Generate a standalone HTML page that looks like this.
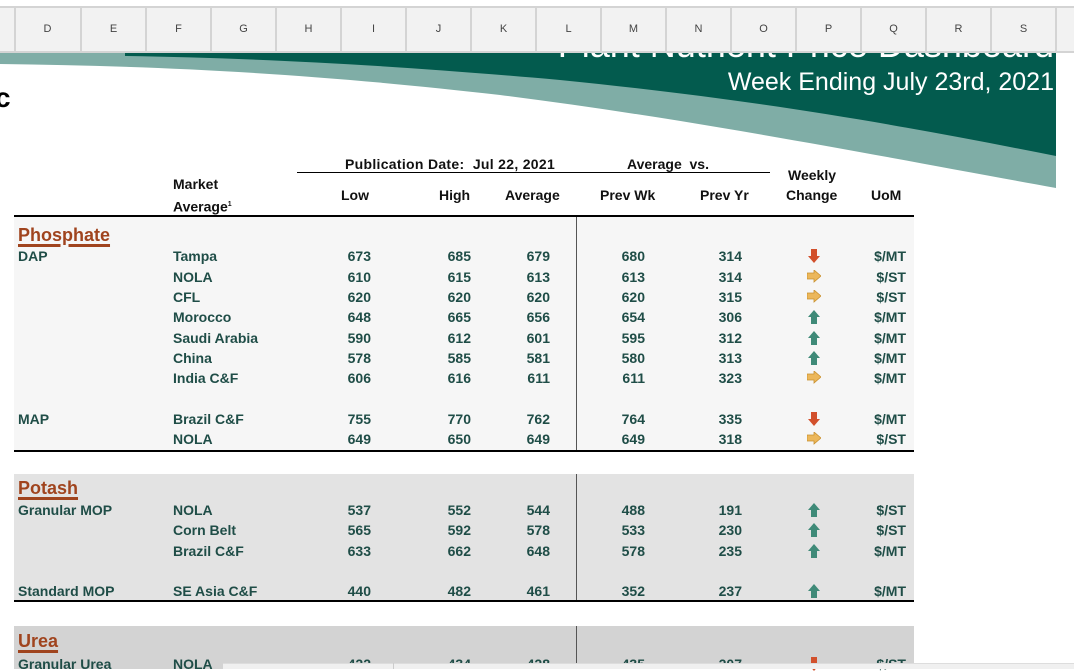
<!DOCTYPE html>
<html><head><meta charset="utf-8"><style>
*{margin:0;padding:0;box-sizing:border-box}
body{width:1074px;height:669px;overflow:hidden;background:#fff;position:relative;font-family:"Liberation Sans",Arial,sans-serif}
.hdr{position:absolute;left:0;top:6px;width:1074px;height:47px;background:#f2f2f2;border-top:2px solid #d4d4d4;border-bottom:2px solid #d4d4d4;z-index:5}
.hdr div{position:absolute;top:0;height:43px;line-height:43px;text-align:center;font-size:11px;color:#444;border-left:2px solid #d4d4d4;width:65px}
.t{position:absolute;font-size:14px;font-weight:bold;color:#1f4d47;white-space:nowrap;line-height:16px}
.r{text-align:right}
.h{color:#111;font-size:14px}
.sec{position:absolute;font-size:18px;font-weight:bold;color:#a0441e;text-decoration:underline;text-decoration-thickness:3px;text-underline-offset:3px;line-height:20px}
.bg{position:absolute;left:14px;width:900px}
.ln{position:absolute;background:#000}
</style></head><body>
<div class="hdr">
<div style="left:14px;">D</div><div style="left:80px">E</div><div style="left:145px">F</div><div style="left:210px">G</div><div style="left:275px">H</div><div style="left:340px">I</div><div style="left:405px">J</div><div style="left:470px">K</div><div style="left:535px">L</div><div style="left:600px">M</div><div style="left:665px">N</div><div style="left:730px">O</div><div style="left:795px">P</div><div style="left:860px">Q</div><div style="left:925px">R</div><div style="left:990px">S</div><div style="left:1055px;width:30px"></div>
</div>
<svg style="position:absolute;left:0;top:0" width="1074" height="669">
<path d="M0 53 L1056 53 L1056 188 C900 160 700 120 500 95 C300 72 150 66 0 64 Z" fill="#7fada6"/>
<path d="M125 53 L1056 53 L1056 156 C900 125 760 100 560 80 C380 64 250 58 125 56 Z" fill="#035b4e"/>
</svg>
<div style="position:absolute;right:20px;top:27px;font-size:36px;line-height:36px;color:#fff;white-space:nowrap;z-index:1">Plant Nutrient Price Dashboard</div>
<div style="position:absolute;right:20px;top:68px;font-size:25px;line-height:28px;color:#fff;white-space:nowrap">Week Ending July 23rd, 2021</div>
<div style="position:absolute;left:-5px;top:82px;font-size:28px;font-weight:bold;color:#000">c</div>

<div class="bg" style="top:217px;height:234px;background:#f6f6f6"></div>
<div class="bg" style="top:474px;height:127px;background:#e3e3e3"></div>
<div class="bg" style="top:626px;height:43px;background:#d3d3d3"></div>
<div class="ln" style="left:576px;top:217px;width:1px;height:234px;background:#555"></div>
<div class="ln" style="left:576px;top:474px;width:1px;height:127px;background:#555"></div>
<div class="ln" style="left:576px;top:626px;width:1px;height:43px;background:#555"></div>
<div class="ln" style="left:297px;top:172px;width:473px;height:1px"></div>
<div class="ln" style="left:14px;top:215px;width:900px;height:2px"></div>
<div class="ln" style="left:14px;top:450px;width:900px;height:2px"></div>
<div class="ln" style="left:14px;top:600px;width:900px;height:2px"></div>

<div class="t h" style="left:345px;top:156px;letter-spacing:0.3px">Publication Date:&nbsp; Jul 22, 2021</div>
<div class="t h" style="left:627px;top:156px">Average&nbsp; vs.</div>
<div class="t h" style="left:173px;top:176px">Market</div>
<div class="t h" style="left:173px;top:197px">Average<sup style="font-size:7px">1</sup></div>
<div class="t h" style="left:341px;top:187px">Low</div>
<div class="t h" style="left:439px;top:187px">High</div>
<div class="t h" style="left:505px;top:187px">Average</div>
<div class="t h" style="left:600px;top:187px">Prev Wk</div>
<div class="t h" style="left:700px;top:187px">Prev Yr</div>
<div class="t h" style="left:788px;top:167px">Weekly</div>
<div class="t h" style="left:786px;top:187px">Change</div>
<div class="t h" style="left:871px;top:187px">UoM</div>

<div class="sec" style="left:18px;top:225px">Phosphate</div>
<div class="sec" style="left:18px;top:478px">Potash</div>
<div class="sec" style="left:18px;top:631px">Urea</div>

<svg width="0" height="0" style="position:absolute"><defs>
<path id="dn" d="M3 0 H9 V7 H12 L6 14 L0 7 H3 Z" fill="#d2502c"/>
<path id="rt" d="M0 3 H7 V0 L14 6 L7 12 V9 H0 Z" fill="#ecb75a" stroke="#c8902f" stroke-width=".8"/>
<path id="up" d="M6 0 L12 7 H9 V14 H3 V7 H0 Z" fill="#3f8a78"/>
</defs></svg>

<div id="rows"></div>
<script>
var R=[
[256,'DAP','Tampa',673,685,679,680,314,'dn','$/MT'],
[277,'','NOLA',610,615,613,613,314,'rt','$/ST'],
[297,'','CFL',620,620,620,620,315,'rt','$/ST'],
[317,'','Morocco',648,665,656,654,306,'up','$/MT'],
[338,'','Saudi Arabia',590,612,601,595,312,'up','$/MT'],
[358,'','China',578,585,581,580,313,'up','$/MT'],
[378,'','India C&F',606,616,611,611,323,'rt','$/MT'],
[419,'MAP','Brazil C&F',755,770,762,764,335,'dn','$/MT'],
[439,'','NOLA',649,650,649,649,318,'rt','$/ST'],
[510,'Granular MOP','NOLA',537,552,544,488,191,'up','$/ST'],
[530,'','Corn Belt',565,592,578,533,230,'up','$/ST'],
[551,'','Brazil C&F',633,662,648,578,235,'up','$/MT'],
[591,'Standard MOP','SE Asia C&F',440,482,461,352,237,'up','$/MT'],
[664,'Granular Urea','NOLA',422,434,428,435,207,'dn','$/ST']];
var h='';var X=[371,471,550,645,742];
R.forEach(function(r){var t=r[0]-8;
h+='<div class="t" style="left:18px;top:'+t+'px">'+r[1]+'</div>';
h+='<div class="t" style="left:173px;top:'+t+'px">'+r[2].replace('&','&amp;')+'</div>';
for(var i=0;i<5;i++)h+='<div class="t r" style="left:'+(X[i]-60)+'px;width:60px;top:'+t+'px">'+r[3+i]+'</div>';
var w=r[8]=='rt'?14:12;
h+='<svg style="position:absolute;left:'+(814-w/2)+'px;top:'+(r[0]-7)+'px" width="'+w+'" height="14"><use href="#'+r[8]+'"/></svg>';
h+='<div class="t r" style="left:846px;width:60px;top:'+t+'px">'+r[9]+'</div>';});
document.getElementById('rows').innerHTML=h;
</script>
<div style="position:absolute;left:223px;top:663px;width:851px;height:6px;background:#f0f0f0;border-top:1px solid #ddd;z-index:6"></div>
<div style="position:absolute;left:393px;top:663px;width:1px;height:6px;background:#ccc;z-index:7"></div>
</body></html>
